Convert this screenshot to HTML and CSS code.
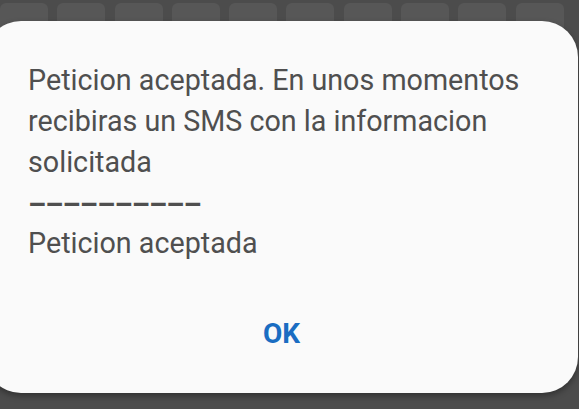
FILE: index.html
```html
<!DOCTYPE html>
<html lang="es">
<head>
<meta charset="utf-8">
<title>Dialogo</title>
<link rel="stylesheet" href="styles.css">
</head>
<body>
<div class="keyboard">
  <div class="key"></div><div class="key"></div><div class="key"></div><div class="key"></div><div class="key"></div>
  <div class="key"></div><div class="key"></div><div class="key"></div><div class="key"></div><div class="key"></div>
</div>
<div class="dialog">
  <p class="message">Peticion aceptada. En unos momentos recibiras un SMS con la informacion solicitada<br><span class="dashes">––––––––––</span><br>Peticion aceptada</p>
  <div class="actions"><button class="ok">OK</button></div>
</div>
</body>
</html>
```
FILE: styles.css
```css
html, body {
  margin: 0;
  padding: 0;
}
body {
  width: 579px;
  height: 409px;
  background: #4c4c4c;
  overflow: hidden;
  position: relative;
  font-family: Roboto, "Noto Sans", sans-serif;
}
.keyboard {
  position: absolute;
  left: 0;
  top: 3px;
  display: flex;
  gap: 9.3px;
}
.key {
  width: 48px;
  height: 40px;
  border-radius: 6px;
  background: #575757;
}
.dialog {
  position: relative;
  margin: 21px 1px 0 -15px;
  height: 372px;
  background: #fafafa;
  border-radius: 36px;
  box-shadow: 0 3px 6px rgba(0,0,0,0.35);
  display: flex;
  flex-direction: column;
  padding: 39px 0 0 43px;
  box-sizing: border-box;
}
.message {
  margin: 0;
  font-size: 28.7px;
  line-height: 40.8px;
  color: #4f4f4f;
  padding-right: 10px;
}
.dashes {
  display: inline-block;
  letter-spacing: -0.8px;
  font-weight: 700;
  transform: translateY(3px);
}
.actions {
  display: flex;
  justify-content: center;
  padding-right: 43px;
  margin-top: 54px;
}
.ok {
  border: none;
  background: none;
  padding: 0;
  font-family: Roboto, "Noto Sans", sans-serif;
  font-weight: 700;
  font-size: 28px;
  line-height: 32px;
  color: #1a6dc2;
}
```
